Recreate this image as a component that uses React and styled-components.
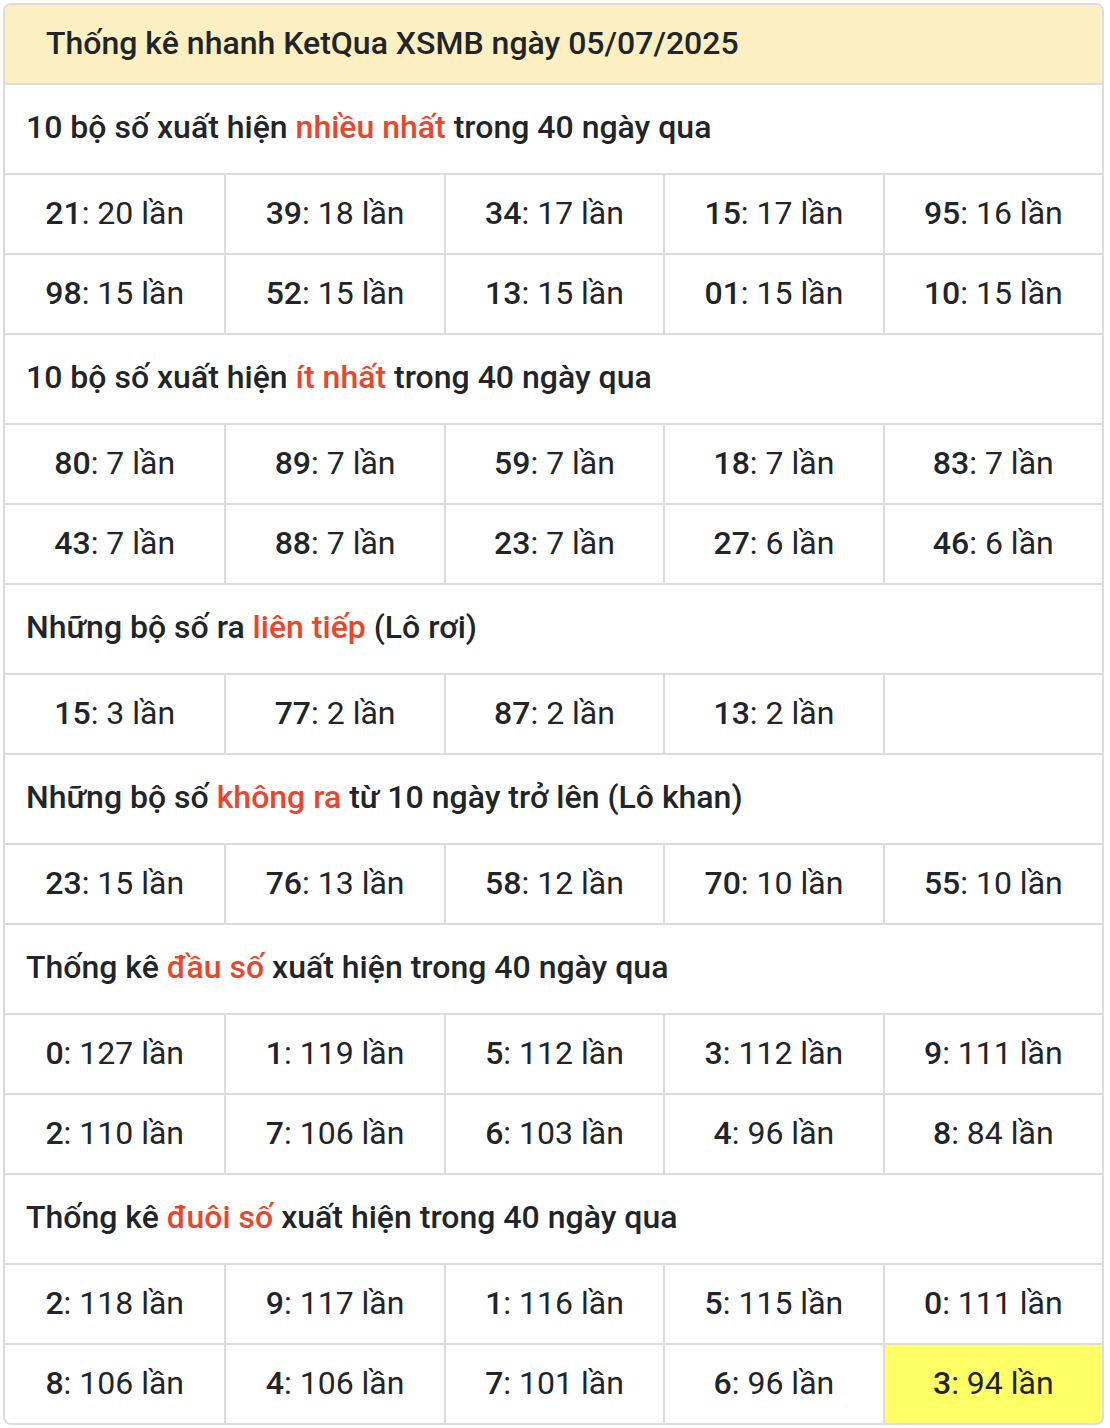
import React from 'react';
import styled, { createGlobalStyle } from 'styled-components';

const GlobalStyle = createGlobalStyle`
  body {
    margin: 0;
    background: #fff;
    font-family: Roboto, "Noto Sans", "Liberation Sans", sans-serif;
    color: #212529;
  }
`;

const Page = styled.div`
  padding: 3px 6px 4px 3px;
`;

const Card = styled.div`
  border: 2px solid #dcdcdc;
  border-radius: 8px;
  overflow: hidden;
`;

const Header = styled.div`
  background: #fcf0c2;
  height: 78px;
  box-sizing: border-box;
  padding-bottom: 2px;
  display: flex;
  align-items: center;
  padding-left: 41px;
  font-size: 32px;
  font-weight: 500;
`;

const Title = styled.div`
  border-top: 2px solid #dcdcdc;
  height: 88px;
  display: flex;
  align-items: center;
  padding-left: 21px;
  font-size: 32px;
  font-weight: 500;
  white-space: pre;
`;

const TitleText = styled.span`
  margin-top: -4px;
`;

const Red = styled.span`
  color: #e9462b;
`;

const Grid = styled.div`
  display: grid;
  grid-template-columns: repeat(5, 1fr);
`;

const Cell = styled.div`
  height: 78px;
  display: flex;
  align-items: center;
  justify-content: center;
  border-top: 2px solid #dcdcdc;
  border-left: ${(p) => (p.$first ? 'none' : '2px solid #dcdcdc')};
  background: ${(p) => (p.$hl ? '#ffff66' : '#fff')};
  font-size: 32px;
  white-space: pre;
`;

const CellText = styled.span`
  margin-top: -2px;
`;

const Num = styled.span`
  font-weight: 500;
`;

const sections = [
  {
    title: ['10 bộ số xuất hiện ', 'nhiều nhất', ' trong 40 ngày qua'],
    items: [
      ['21', 20], ['39', 18], ['34', 17], ['15', 17], ['95', 16],
      ['98', 15], ['52', 15], ['13', 15], ['01', 15], ['10', 15],
    ],
  },
  {
    title: ['10 bộ số xuất hiện ', 'ít nhất', ' trong 40 ngày qua'],
    items: [
      ['80', 7], ['89', 7], ['59', 7], ['18', 7], ['83', 7],
      ['43', 7], ['88', 7], ['23', 7], ['27', 6], ['46', 6],
    ],
  },
  {
    title: ['Những bộ số ra ', 'liên tiếp', ' (Lô rơi)'],
    items: [['15', 3], ['77', 2], ['87', 2], ['13', 2], null],
  },
  {
    title: ['Những bộ số ', 'không ra', ' từ 10 ngày trở lên (Lô khan)'],
    items: [['23', 15], ['76', 13], ['58', 12], ['70', 10], ['55', 10]],
  },
  {
    title: ['Thống kê ', 'đầu số', ' xuất hiện trong 40 ngày qua'],
    items: [
      ['0', 127], ['1', 119], ['5', 112], ['3', 112], ['9', 111],
      ['2', 110], ['7', 106], ['6', 103], ['4', 96], ['8', 84],
    ],
  },
  {
    title: ['Thống kê ', 'đuôi số', ' xuất hiện trong 40 ngày qua'],
    items: [
      ['2', 118], ['9', 117], ['1', 116], ['5', 115], ['0', 111],
      ['8', 106], ['4', 106], ['7', 101], ['6', 96], ['3', 94, true],
    ],
  },
];

export default function App() {
  return (
    <Page>
      <GlobalStyle />
      <Card>
        <Header>Thống kê nhanh KetQua XSMB ngày 05/07/2025</Header>
        {sections.map((s, i) => (
          <div key={i}>
            <Title>
              <TitleText>
                {s.title[0]}
                <Red>{s.title[1]}</Red>
                {s.title[2]}
              </TitleText>
            </Title>
            <Grid>
              {s.items.map((it, j) => (
                <Cell key={j} $first={j % 5 === 0} $hl={it && it[2]}>
                  {it && (
                    <CellText>
                      <Num>{it[0]}</Num>{`: ${it[1]} lần`}
                    </CellText>
                  )}
                </Cell>
              ))}
            </Grid>
          </div>
        ))}
      </Card>
    </Page>
  );
}
